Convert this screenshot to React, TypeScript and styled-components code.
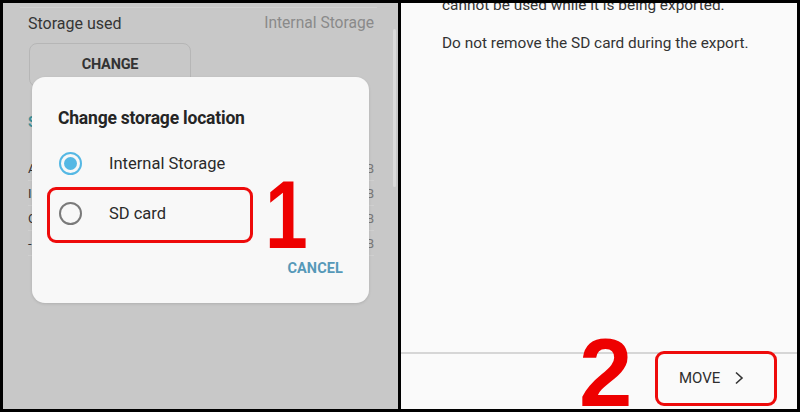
import React from "react";
import styled, { createGlobalStyle } from "styled-components";

const Global = createGlobalStyle`
  html, body { margin: 0; padding: 0; background: #000; }
  body { font-family: Roboto, "Liberation Sans", sans-serif; }
  * { box-sizing: border-box; }
`;

const Frame = styled.div`
  width: 800px;
  height: 412px;
  background: #000;
  display: grid;
  grid-template-columns: 395px 396px;
  column-gap: 3px;
  padding: 3px 3px 3px 3px;
  overflow: hidden;
`;

const LeftPanel = styled.section`
  position: relative;
  background: #c8c8c8;
  overflow: hidden;
  display: flex;
  flex-direction: column;
  padding: 4px 24px 0 25px;
  height: 406px;
`;

const TopRule = styled.div`
  height: 1px;
  background: #d2d2d2;
  margin: 0 -3px 0 -8px;
`;

const HeaderRow = styled.div`
  display: flex;
  justify-content: space-between;
  align-items: center;
  height: 30px;
  font-size: 16px;
`;

const HeaderLabel = styled.span`
  color: #353535;
`;

const HeaderValue = styled.span`
  color: #8a8a8a;
  font-size: 15.6px;
`;

const ChangeButton = styled.div`
  margin: 5px 0 0 1px;
  width: 162px;
  height: 44px;
  border: 1px solid #b6b6b6;
  border-radius: 8px;
  display: flex;
  justify-content: center;
  padding-top: 12px;
  font-weight: 700;
  font-size: 14.5px;
  color: #333;
  letter-spacing: -0.2px;
`;

const SectionTitle = styled.div`
  margin: 18px 0 17px;
  height: 34px;
  display: flex;
  align-items: center;
  color: #3b8f97;
  font-size: 14px;
  font-weight: 700;
`;

const ListRow = styled.div`
  height: 25px;
  border-bottom: 1px solid #d0d0d0;
  display: flex;
  justify-content: space-between;
  align-items: center;
  font-size: 13px;
  color: #333;
`;

const RowValue = styled.span`
  color: #777;
`;

const ScrollThumb = styled.div`
  position: absolute;
  right: 2px;
  top: 26px;
  width: 3px;
  height: 158px;
  background: #dadada;
  border-radius: 2px;
`;

const Dialog = styled.div`
  position: absolute;
  left: 29px;
  top: 74px;
  width: 337px;
  height: 226px;
  background: #f8f8f8;
  border-radius: 13px;
  box-shadow: 0 1px 3px rgba(0, 0, 0, 0.12);
  display: flex;
  flex-direction: column;
  padding: 28px 0 0 0;
`;

const DialogTitle = styled.div`
  padding-left: 26px;
  font-size: 17.5px;
  font-weight: 700;
  color: #252525;
  letter-spacing: -0.2px;
  height: 26px;
  line-height: 26px;
`;

const Options = styled.div`
  margin-top: 7px;
  display: flex;
  flex-direction: column;
`;

const OptionRow = styled.div<{ $marked?: boolean }>`
  position: relative;
  height: 50px;
  display: flex;
  align-items: center;
  padding-left: 27px;
  gap: 27px;
  font-size: 16.5px;
  color: #2a2a2a;

  &::after {
    content: "";
    display: ${(p) => (p.$marked ? "block" : "none")};
    position: absolute;
    left: 15px;
    width: 200px;
    top: -1px;
    bottom: -5px;
    border: 3px solid #ee0b0b;
    border-radius: 9px;
  }
`;

const Radio = styled.span<{ $checked?: boolean }>`
  width: 23px;
  height: 23px;
  border-radius: 50%;
  border: 2px solid ${(p) => (p.$checked ? "#55b8e4" : "#7a7a7a")};
  display: flex;
  align-items: center;
  justify-content: center;
  flex: none;

  &::before {
    content: "";
    display: ${(p) => (p.$checked ? "block" : "none")};
    width: 13px;
    height: 13px;
    border-radius: 50%;
    background: #55b8e4;
  }
`;

const DialogActions = styled.div`
  margin-top: 22px;
  display: flex;
  justify-content: flex-end;
  padding-right: 26px;
`;

const TextButton = styled.span`
  font-size: 14.5px;
  font-weight: 700;
  color: #5699b8;
  letter-spacing: 0.1px;
`;

const StepNumber = styled.span<{ $left: number; $top: number }>`
  position: absolute;
  left: ${(p) => p.$left}px;
  top: ${(p) => p.$top}px;
  font-family: "Liberation Sans", Arial, sans-serif;
  font-weight: 700;
  font-size: 96px;
  line-height: 1;
  color: #ee0000;
`;

const NarrowStep = styled(StepNumber)`
  transform: scaleX(0.8);
  transform-origin: left top;
`;

const RightPanel = styled.section`
  position: relative;
  background: #fafafa;
  height: 406px;
  display: flex;
  flex-direction: column;
  overflow: hidden;
`;

const Body = styled.div`
  flex: 1;
  padding: 0 20px 0 41px;
  display: flex;
  flex-direction: column;
  gap: 18px;
`;

const Para = styled.p`
  margin: 0;
  font-size: 15.4px;
  line-height: 20px;
  color: #333;
`;

const ClippedPara = styled(Para)`
  margin-top: -8px;
`;

const Footer = styled.div`
  height: 57px;
  border-top: 2px solid #d6d6d6;
  display: flex;
  justify-content: flex-end;
  align-items: center;
  padding-right: 20px;
`;

const MoveButton = styled.div`
  position: relative;
  width: 122px;
  height: 55px;
  margin-top: -7px;
  display: flex;
  align-items: center;
  padding-left: 24px;
  gap: 14px;
  font-size: 15px;
  color: #2e2e2e;

  &::after {
    content: "";
    position: absolute;
    inset: 0;
    border: 3px solid #ee0b0b;
    border-radius: 9px;
  }
`;

const Chevron = () => (
  <svg width="10" height="14" viewBox="0 0 10 14" fill="none">
    <path d="M2 1.5 L8 7 L2 12.5" stroke="#333" strokeWidth="1.6" />
  </svg>
);

export default function App() {
  return (
    <>
      <Global />
      <Frame>
        <LeftPanel>
          <TopRule />
          <HeaderRow>
            <HeaderLabel>Storage used</HeaderLabel>
            <HeaderValue>Internal Storage</HeaderValue>
          </HeaderRow>
          <ChangeButton>CHANGE</ChangeButton>
          <SectionTitle>Storage</SectionTitle>
          <ListRow>
            <span>Apps</span>
            <RowValue>0 B</RowValue>
          </ListRow>
          <ListRow>
            <span>Images</span>
            <RowValue>0 B</RowValue>
          </ListRow>
          <ListRow>
            <span>Other</span>
            <RowValue>0 B</RowValue>
          </ListRow>
          <ListRow>
            <span>- Total</span>
            <RowValue>0 B</RowValue>
          </ListRow>
          <ScrollThumb />
          <Dialog>
            <DialogTitle>Change storage location</DialogTitle>
            <Options>
              <OptionRow>
                <Radio $checked />
                Internal Storage
              </OptionRow>
              <OptionRow $marked>
                <Radio />
                SD card
              </OptionRow>
            </Options>
            <DialogActions>
              <TextButton>CANCEL</TextButton>
            </DialogActions>
          </Dialog>
          <NarrowStep $left={262} $top={164}>1</NarrowStep>
        </LeftPanel>
        <RightPanel>
          <Body>
            <ClippedPara>cannot be used while it is being exported.</ClippedPara>
            <Para>Do not remove the SD card during the export.</Para>
          </Body>
          <Footer>
            <MoveButton>
              MOVE
              <Chevron />
            </MoveButton>
          </Footer>
          <StepNumber $left={178} $top={322}>2</StepNumber>
        </RightPanel>
      </Frame>
    </>
  );
}
